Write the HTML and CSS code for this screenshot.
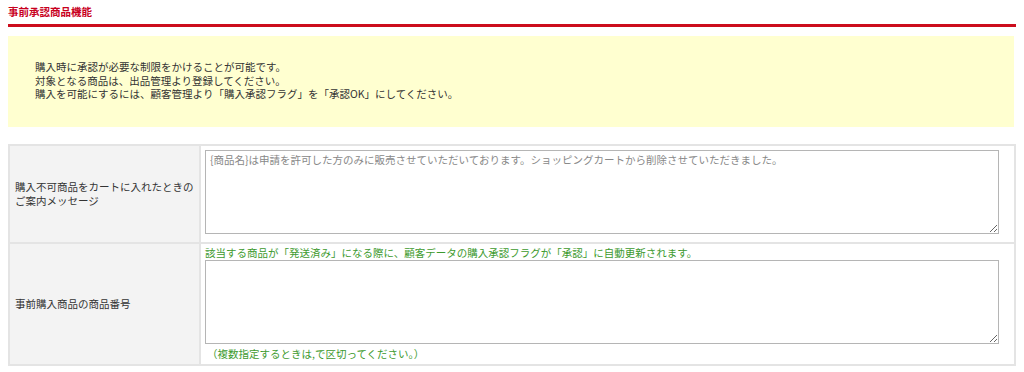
FILE: index.html
```
<!DOCTYPE html>
<html lang="ja">
	<head>
		<meta charset="UTF-8">
		<title>事前承認商品機能</title>
		<link rel="stylesheet" href="styles.css">
	</head>
	<body>
		<h2 class="page-title">事前承認商品機能</h2>
		<div class="notice">
			<p>購入時に承認が必要な制限をかけることが可能です。</p>
			<p>対象となる商品は、出品管理より登録してください。</p>
			<p>購入を可能にするには、顧客管理より「購入承認フラグ」を「承認OK」にしてください。</p>
		</div>
		<table class="form-table">
		<tr class="row-msg">
			<th>購入不可商品をカートに入れたときの<br>ご案内メッセージ</th>
			<td>
				<textarea class="msg-area">{商品名}は申請を許可した方のみに販売させていただいております。ショッピングカートから削除させていただきました。</textarea>
			</td>
		</tr>
		<tr class="row-code">
			<th>事前購入商品の商品番号</th>
			<td>
				<div class="hint">該当する商品が「発送済み」になる際に、顧客データの購入承認フラグが「承認」に自動更新されます。</div>
				<textarea class="code-area"></textarea>
				<div class="hint note">（複数指定するときは,で区切ってください。）</div>
			</td>
		</tr>
		</table>
	</body>
</html>
```

FILE: styles.css
```
body {
	margin: 0 8px;
	font-family: "Noto Sans CJK JP", "Liberation Sans", sans-serif;
	font-size: 10.5px;
	color: #333;
	background: #fff;
}
.page-title {
	margin: 0;
	padding: 4px 0 4px;
	line-height: 16px;
	font-size: 10.5px;
	font-weight: bold;
	color: #c8001e;
	border-bottom: 3px solid #cc0d1d;
}
.notice {
	margin: 9px 2px 0 0;
	height: 91px;
	box-sizing: border-box;
	padding: 24px 27px 0;
	background: #ffffd0;
}
.notice p {
	margin: 0;
	line-height: 13.5px;
}
.form-table {
	width: 100%;
	margin-top: 17px;
	border-collapse: collapse;
	border: 2px solid #e4e4e4;
}
.form-table th,
.form-table td {
	border: 2px solid #e4e4e4;
}
.form-table th {
	width: 179px;
	padding: 0 5px;
	text-align: left;
	font-weight: normal;
	line-height: 14px;
	background: #f3f3f3;
	vertical-align: middle;
}
.form-table td {
	padding: 0 4px;
	vertical-align: top;
}
textarea {
	display: block;
	box-sizing: border-box;
	width: 794px;
	height: 84px;
	padding: 2px 4px;
	border: 1px solid #b5b5b5;
	font-family: inherit;
	font-size: 10.5px;
	line-height: 14px;
	color: #888;
}
.row-msg td {
	padding-top: 4px;
	padding-bottom: 8px;
}
.row-code td {
	padding-top: 2px;
	padding-bottom: 3px;
}
.hint {
	line-height: 14px;
	color: #3d9a2e;
}
.note {
	margin-top: 3px;
	padding-left: 2px;
}
```
